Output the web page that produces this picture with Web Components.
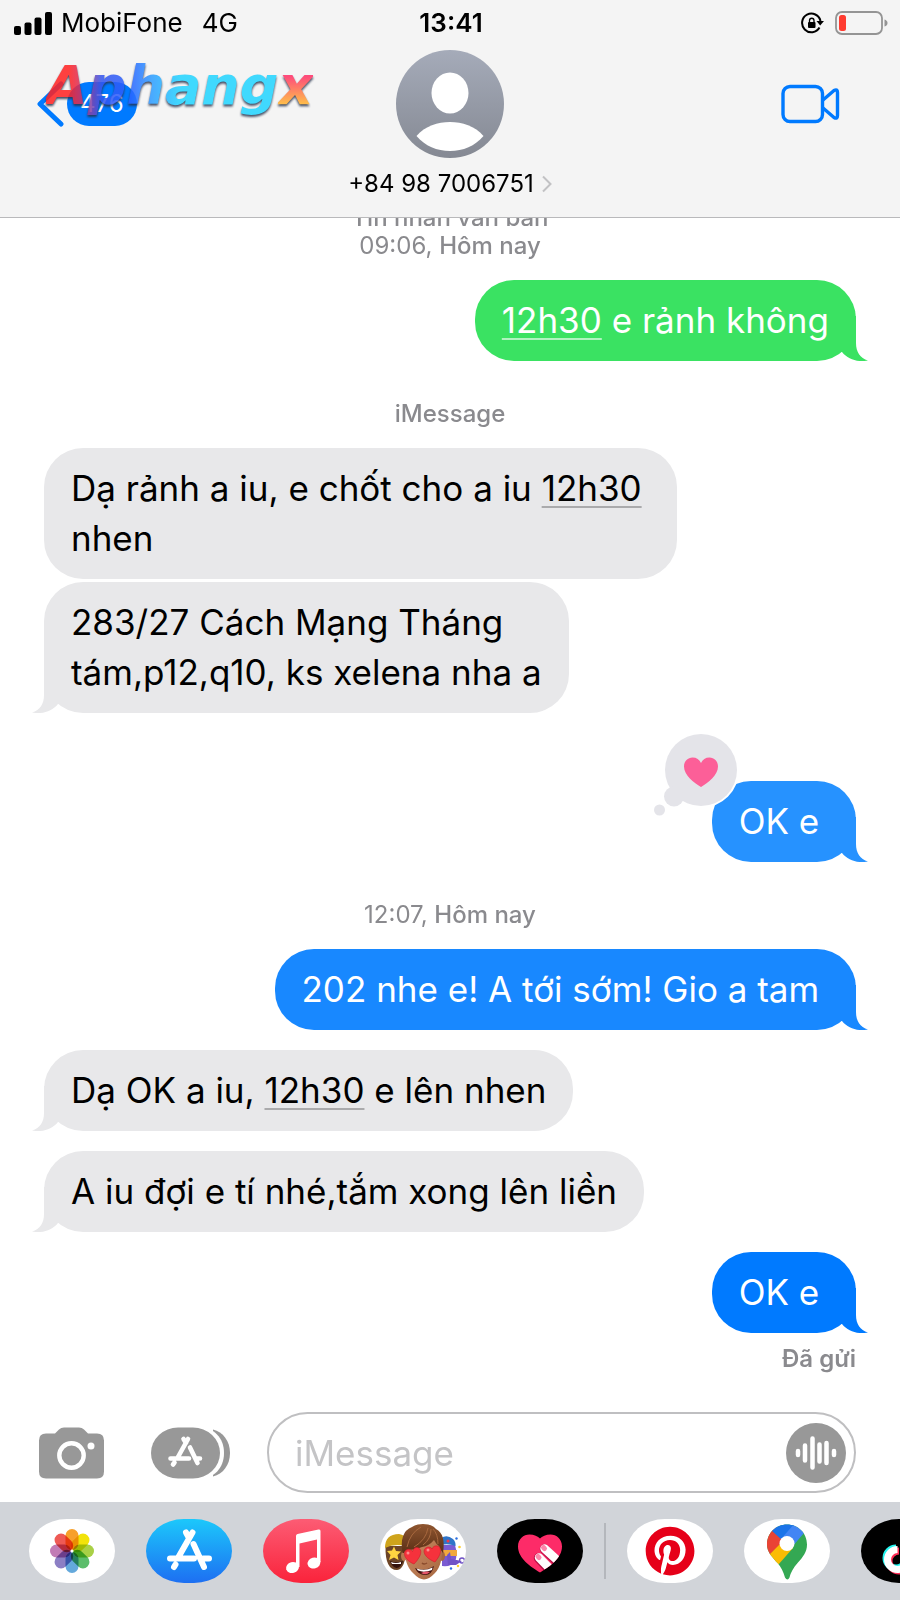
<!DOCTYPE html>
<html lang="vi">
<head>
<meta charset="utf-8">
<meta name="viewport" content="width=device-width, initial-scale=1">
<title>+84 98 7006751</title>
<style>
  html, body {
    height: 100%;
    margin: 0;
  }

  body {
    font-family: Inter, "Liberation Sans", sans-serif;
    background: #ffffff;
    color: #000000;
    overflow: hidden;
  }
</style>
</head>
<body>
<chat-screen>
  <chat-header slot="header" carrier="MobiFone" network="4G" time="13:41" unread="476" contact="+84 98 7006751"></chat-header>

  <chat-stamp><b>Tin nhắn văn bản</b><br>09:06, <b>Hôm nay</b></chat-stamp>
  <chat-bubble side="out" tail style="--bubble: #3ae262"><a href="#">12h30</a> e rảnh không</chat-bubble>

  <chat-stamp spaced><b>iMessage</b></chat-stamp>
  <chat-bubble side="in" wide>Dạ rảnh a iu, e chốt cho a iu <a href="#">12h30</a><br>nhen</chat-bubble>
  <chat-bubble side="in" tail follows>283/27 Cách Mạng Tháng<br>tám,p12,q10, ks xelena nha a</chat-bubble>
  <chat-bubble side="out" tail reaction="heart" style="--bubble: #2692ff">OK e&nbsp;</chat-bubble>

  <chat-stamp spaced>12:07, <b>Hôm nay</b></chat-stamp>
  <chat-bubble side="out" tail style="--bubble: #1888ff">202 nhe e! A tới sớm! Gio a tam&nbsp;</chat-bubble>
  <chat-bubble side="in" tail>Dạ OK a iu, <a href="#">12h30</a> e lên nhen</chat-bubble>
  <chat-bubble side="in" tail>A iu đợi e tí nhé,tắm xong lên liền</chat-bubble>
  <chat-bubble side="out" tail style="--bubble: #007aff">OK e&nbsp;</chat-bubble>
  <chat-stamp receipt><b>Đã gửi</b></chat-stamp>

  <chat-composer slot="footer" placeholder="iMessage"></chat-composer>
  <app-drawer slot="footer">
    <drawer-app name="photos" label="Ảnh"></drawer-app>
    <drawer-app name="store" label="App Store"></drawer-app>
    <drawer-app name="music" label="Nhạc"></drawer-app>
    <drawer-app name="memoji" label="Memoji"></drawer-app>
    <drawer-app name="touch" label="Digital Touch"></drawer-app>
    <drawer-app slot="more" name="pinterest" label="Pinterest"></drawer-app>
    <drawer-app slot="more" name="maps" label="Google Maps"></drawer-app>
    <drawer-app slot="more" name="tiktok" label="TikTok"></drawer-app>
  </app-drawer>
</chat-screen>

<script>
class ChatScreen extends HTMLElement {
  constructor() {
    super();
    this.attachShadow({ mode: "open" }).innerHTML = `
<style>
  :host {
    display: flex;
    flex-direction: column;
    height: 100%;
  }

  /* newest messages stay at the bottom, older ones slide under the header */
  main {
    flex: 1;
    min-height: 0;
    display: flex;
    flex-direction: column;
    justify-content: flex-end;
    overflow: hidden;
    padding: 0 44px 30px;
  }
</style>
<slot name="header"></slot>
<main><slot></slot></main>
<slot name="footer"></slot>
`;
  }
}

class ChatHeader extends HTMLElement {
  constructor() {
    super();
    this.attachShadow({ mode: "open" });
  }

  connectedCallback() {
    const get = (name) => this.getAttribute(name);
    this.shadowRoot.innerHTML = `
<style>
  :host {
    display: block;
    position: relative;
    background: #f4f4f4;
    border-bottom: 1px solid #b9b9bb;
    font-size: 24px;
    line-height: 28px;
  }

  svg {
    display: block;
  }

  .status {
    display: grid;
    grid-template-columns: 1fr auto 1fr;
    align-items: center;
    height: 46px;
    padding: 0 12px 0 14px;
    font-size: 26px;
  }

  .status > div {
    display: flex;
    align-items: center;
  }

  .carrier {
    gap: 9px;
  }

  .network {
    margin-left: 10px;
  }

  .time {
    font-weight: 600;
  }

  .power {
    justify-content: flex-end;
    gap: 11px;
  }

  nav {
    display: grid;
    grid-template-columns: 1fr auto 1fr;
    grid-template-rows: 108px 28px;
    row-gap: 12px;
    align-items: center;
    padding: 4px 36px 19px;
  }

  a {
    color: inherit;
    text-decoration: none;
  }

  button {
    border: 0;
    padding: 0;
    background: none;
    cursor: pointer;
  }

  .back {
    display: flex;
    align-items: center;
    gap: 3px;
  }

  .unread {
    padding: 8px 13px;
    border-radius: 22px;
    background: #007aff;
    color: #ffffff;
  }

  .avatar {
    justify-self: center;
  }

  .video {
    justify-self: end;
    margin-right: 24px;
  }

  .contact {
    grid-column: 1 / -1;
    justify-self: center;
    display: flex;
    align-items: center;
    gap: 8px;
  }

  .wordmark {
    position: absolute;
    left: 46px;
    top: 54px;
    font: italic bold 54px/64px "DejaVu Sans", sans-serif;
    opacity: 0.86;
    filter: drop-shadow(0 2px 1px #26334d);
    pointer-events: none;
  }

  .wordmark span {
    background: linear-gradient(90deg, #ff2222 10%, #e02c50 14%, #3355ee 24%, #2a62ff 36%, #2e9fff 46%, #22d4ff 58%);
    background-clip: text;
    -webkit-background-clip: text;
    color: transparent;
  }

  .wordmark .end {
    background: linear-gradient(180deg, #ff2f68 35%, #ffb030 78%);
    background-clip: text;
    -webkit-background-clip: text;
  }
</style>
<div class="status">
  <div class="carrier">
    <svg width="38" height="23" viewBox="0 0 38 23">
      <rect x="0" y="14" width="7" height="9" rx="2"/>
      <rect x="10.5" y="10.5" width="7" height="12.5" rx="2"/>
      <rect x="20.5" y="5.5" width="7" height="17.5" rx="2"/>
      <rect x="31" y="0" width="7" height="23" rx="2"/>
    </svg>
    <span>${get("carrier")}</span>
    <span class="network">${get("network")}</span>
  </div>
  <div class="time">${get("time")}</div>
  <div class="power">
    <svg width="23" height="22" viewBox="0 0 23 22">
      <path d="M18.500 15.500A9.300 9.300 0 1 1 19.500 9" fill="none" stroke="#000" stroke-width="2"/>
      <path d="M15.500 9h7.500l-3.800 4.500z"/>
      <rect x="7" y="10" width="7.500" height="6" rx="1"/>
      <path d="M8.500 10.500V8.500a2.200 2.200 0 0 1 4.500 0v2" fill="none" stroke="#000" stroke-width="1.300"/>
    </svg>
    <svg width="53" height="24" viewBox="0 0 53 24">
      <rect x="1" y="1" width="46" height="22" rx="6" fill="none" stroke="#949494" stroke-width="1.800"/>
      <rect x="4" y="4" width="7" height="16" rx="2.500" fill="#ff3b30"/>
      <path d="M49.500 8.500q3 1 3 3.500t-3 3.500z" fill="#949494"/>
    </svg>
  </div>
</div>
<nav>
  <a class="back" href="#" aria-label="Quay lại">
    <svg width="28" height="48" viewBox="0 0 28 48">
      <path d="M25 4L4 24L25 44" fill="none" stroke="#007aff" stroke-width="5" stroke-linecap="round" stroke-linejoin="round"/>
    </svg>
    <span class="unread">${get("unread")}</span>
  </a>
  <svg class="avatar" width="108" height="108" viewBox="0 0 108 108">
    <defs>
      <linearGradient id="sky" x1="0" y1="0" x2="0" y2="1">
        <stop offset="0" stop-color="#a5abb9"/>
        <stop offset="1" stop-color="#858993"/>
      </linearGradient>
    </defs>
    <circle cx="54" cy="54" r="54" fill="url(#sky)"/>
    <ellipse cx="54" cy="43" rx="18.500" ry="20.500" fill="#fff"/>
    <path d="M20.500 86C29 76 42 72 54 72s25 4 33.500 14C79 96 67 101 54 101S29 96 20.500 86z" fill="#fff"/>
  </svg>
  <button class="video" type="button" aria-label="FaceTime">
    <svg width="59" height="40" viewBox="0 0 59 40">
      <g fill="none" stroke="#007aff" stroke-width="3.400" stroke-linejoin="round">
        <rect x="2" y="2.500" width="39.500" height="35" rx="7"/>
        <path d="M42 16L53 6.500Q56.500 4.500 56.500 8.500v23q0 4-3.500 2L42 24"/>
      </g>
    </svg>
  </button>
  <a class="contact" href="#">
    <span>${get("contact")}</span>
    <svg width="10" height="18" viewBox="0 0 10 18">
      <path d="M1 1.500L8.500 9L1 16.500" fill="none" stroke="#c2c2c4" stroke-width="2"/>
    </svg>
  </a>
</nav>
<div class="wordmark"><span>Aphang</span><span class="end">x</span></div>
`;
  }
}

class ChatStamp extends HTMLElement {
  constructor() {
    super();
    this.attachShadow({ mode: "open" }).innerHTML = `
<style>
  :host {
    flex: none;
    display: block;
    text-align: center;
    font-size: 24px;
    line-height: 28px;
    color: #8a8a8e;
  }

  :host([spaced]) {
    margin-top: 39px;
  }

  :host([receipt]) {
    margin-top: 12px;
    text-align: right;
  }

  ::slotted(b) {
    font-weight: 500;
  }

  :host([receipt]) ::slotted(b) {
    font-weight: 600;
  }
</style>
<slot></slot>
`;
  }
}

const reactions = {
  heart: `
<svg class="reaction" width="88" height="88" viewBox="0 0 88 88">
  <circle cx="49" cy="38" r="38" fill="#fff"/>
  <g fill="#e4e4e9">
    <circle cx="49" cy="38" r="36"/>
    <circle cx="22" cy="64.500" r="10"/>
    <circle cx="7.500" cy="78" r="5.500"/>
  </g>
  <path d="M49 55C42 50.500 32 43.500 32 34.500C32 29 36 25.500 40.500 25.500C44.500 25.500 47.500 27.500 49 31C50.500 27.500 53.500 25.500 57.500 25.500C62 25.500 66 29 66 34.500C66 43.500 56 50.500 49 55z" fill="#fc5f98"/>
</svg>`,
};

class ChatBubble extends HTMLElement {
  constructor() {
    super();
    this.attachShadow({ mode: "open" });
  }

  connectedCallback() {
    const reaction = reactions[this.getAttribute("reaction")] || "";
    this.shadowRoot.innerHTML = `
<style>
  :host {
    flex: none;
    position: relative;
    box-sizing: border-box;
    max-width: 78%;
    margin-top: 20px;
    padding: 15px 27px 16px;
    border-radius: 39px;
    font-size: 35px;
    line-height: 50px;
  }

  :host([side="in"]) {
    align-self: flex-start;
    background: #e8e8ea;
    --bubble: #e8e8ea;
    --underline: #aaaaac;
  }

  :host([side="out"]) {
    align-self: flex-end;
    background: var(--bubble);
    color: #ffffff;
    --underline: rgba(255, 255, 255, 0.6);
  }

  :host([wide]) {
    width: 78%;
  }

  :host([follows]) {
    margin-top: 3px;
  }

  :host([reaction]) {
    margin-top: 68px;
  }

  ::slotted(a) {
    color: inherit;
    text-decoration: underline 2px var(--underline);
    text-underline-offset: 5px;
    text-decoration-skip-ink: none;
  }

  .tail {
    display: none;
    position: absolute;
    right: -12px;
    bottom: 0;
    fill: var(--bubble);
  }

  :host([tail]) .tail {
    display: block;
  }

  :host([side="in"]) .tail {
    right: auto;
    left: -12px;
    transform: scaleX(-1);
  }

  .reaction {
    position: absolute;
    left: -60px;
    top: -49px;
  }
</style>
<slot></slot>
<svg class="tail" width="27" height="45" viewBox="0 0 27 45">
  <path d="M0 0H15V27C15 36 19 42 27 44.500C17 46.500 7 43.500 1 36L0 36z"/>
</svg>
${reaction}
`;
  }
}

class ChatComposer extends HTMLElement {
  constructor() {
    super();
    this.attachShadow({ mode: "open" });
  }

  connectedCallback() {
    const placeholder = this.getAttribute("placeholder");
    this.shadowRoot.innerHTML = `
<style>
  :host {
    display: flex;
    align-items: center;
    padding: 9px 44px 9px 38px;
  }

  button {
    flex: none;
    border: 0;
    padding: 0;
    background: none;
    cursor: pointer;
  }

  svg {
    display: block;
  }

  .apps {
    margin: 0 36px 0 46px;
  }

  .field {
    flex: 1;
    min-width: 0;
    display: flex;
    align-items: center;
    box-sizing: border-box;
    height: 81px;
    padding: 0 8px 0 26px;
    border: 2px solid #bfbfc1;
    border-radius: 41px;
  }

  input {
    flex: 1;
    min-width: 0;
    border: 0;
    padding: 0;
    outline: none;
    background: none;
    font: inherit;
    font-size: 35px;
    line-height: 50px;
  }

  input::placeholder {
    color: #c4c4c6;
    opacity: 1;
  }
</style>
<button type="button" aria-label="Camera">
  <svg width="67" height="52" viewBox="0 0 67 52">
    <path d="M8 6.500H17L21 2.500Q23 .5 26 .5H41Q44 .5 46 2.500L50 6.500H59Q66 6.500 66 13.500V44.500Q66 51.500 59 51.500H8Q1 51.500 1 44.500V13.500Q1 6.500 8 6.500z" fill="#989898"/>
    <circle cx="33.500" cy="28.500" r="12.200" fill="none" stroke="#fff" stroke-width="4.400"/>
    <circle cx="53" cy="19" r="3.500" fill="#fff"/>
  </svg>
</button>
<button class="apps" type="button" aria-label="Ứng dụng">
  <svg width="80" height="52" viewBox="0 0 80 52">
    <path d="M62 2.500C72 5 79 14 79 26S72 47 62 49.500z" fill="#989898"/>
    <path d="M27 0H47C63 0 73 11 73 26S63 52 47 52z" fill="#fff"/>
    <rect x="0" y=".5" width="69" height="51" rx="27" ry="25.500" fill="#989898"/>
    <g stroke="#fff" stroke-width="4.600" stroke-linecap="round" fill="none">
      <path d="M37 12L27 30M32.500 12L35 16M39 20.500L46.500 36M19.500 31.500H38M45 31.500H49M23.500 35.500L22 37.500"/>
    </g>
  </svg>
</button>
<div class="field">
  <input type="text" placeholder="${placeholder}" aria-label="${placeholder}">
  <button type="button" aria-label="Ghi âm">
    <svg width="60" height="60" viewBox="0 0 60 60">
      <circle cx="30" cy="30" r="30" fill="#989898"/>
      <path d="M12 28v4M19 22.500v15M26.500 15.500v29M33.500 21.500v17M40.500 20v20M48 28v4" stroke="#fff" stroke-width="4.500" stroke-linecap="round"/>
    </svg>
  </button>
</div>
`;
  }
}

class AppDrawer extends HTMLElement {
  constructor() {
    super();
    this.attachShadow({ mode: "open" }).innerHTML = `
<style>
  :host {
    display: flex;
    align-items: center;
    padding: 17px 0 17px 29px;
    background: #d1d4d9;
    overflow: hidden;
  }

  div {
    flex: none;
    display: flex;
    gap: 31px;
  }

  hr {
    flex: none;
    width: 2px;
    height: 56px;
    margin: 0 21px;
    border: 0;
    background: #b4b7bc;
  }
</style>
<div><slot></slot></div>
<hr>
<div><slot name="more"></slot></div>
`;
  }
}

const petals = ["#f7a02b", "#f2e30a", "#a9d046", "#5cbd6b", "#64a9dc", "#8c7fc4", "#c27cb5", "#ee5a55"]
  .map((color, i) => `<rect x="36.500" y="10" width="13" height="21" rx="6.500" fill="${color}" transform="rotate(${i * 45} 43 32)"/>`)
  .join("");

// every icon is drawn on the 86x64 pill
const apps = {
  photos: {
    back: "#ffffff",
    art: `<g style="isolation: isolate" class="petals">${petals}</g><circle cx="43" cy="32" r="1.500" fill="#fff"/>`,
  },
  store: {
    back: "linear-gradient(#1cc8fb, #1d6ff2)",
    art: `
      <g stroke="#fff" stroke-width="6" stroke-linecap="round" fill="none">
        <path d="M46.500 13.500L32.500 38M40 13.500L43 19M47.500 25L58 48M24 39.500H48M57 39.500H63M29.500 45.500L28 48"/>
      </g>`,
  },
  music: {
    back: "linear-gradient(#fc5c74, #fa233b)",
    art: `
      <g fill="#fff">
        <path d="M33 17Q33 15.500 34.500 15L55.500 10.500Q57.500 10 57.500 12V43H54V20.500L36.500 24.500V48H33z"/>
        <ellipse cx="29.500" cy="48.500" rx="6.500" ry="5.500" transform="rotate(-15 29.500 48.500)"/>
        <ellipse cx="51" cy="44" rx="6.500" ry="5.500" transform="rotate(-15 51 44)"/>
      </g>`,
  },
  memoji: {
    back: "#ffffff",
    art: `
      <defs>
        <linearGradient id="skin" x1="0" y1="0" x2="1" y2="1">
          <stop offset="0" stop-color="#cf9068"/>
          <stop offset="1" stop-color="#a5663f"/>
        </linearGradient>
        <linearGradient id="hair" x1="0" y1="0" x2="0" y2="1">
          <stop offset="0" stop-color="#8f5630"/>
          <stop offset="1" stop-color="#5a2f16"/>
        </linearGradient>
      </defs>
      <path d="M5.500 27Q5 51 17 51Q26 50 26 27z" fill="#6d4527"/>
      <path d="M5 29Q5 15 19 15Q25 16 26 20V27Q14 24 5 29z" fill="#cfa41c"/>
      <path d="M10 42Q16 44.500 23 42Q21 49 16.500 49Q12 48 10 42z" fill="#34130d"/>
      <path d="M11 43Q16 45 21 43V45H12z" fill="#fff"/>
      <path d="M14 27.500L16 32L21 32.500L17.500 36L18.500 41L14 38.500L9 41L10.500 36L7 32L12 31.500z" fill="#ffd541"/>
      <path d="M62 26H75Q78 36 75 43Q71 48 62 47z" fill="#7a5bd2"/>
      <path d="M61 19Q67 15 73 20Q76 23 75.500 27Q68 24 61 26z" fill="#2f75c9"/>
      <circle cx="68" cy="22" r="1.500" fill="#f0384d"/>
      <path d="M60 31H77V37H60z" fill="#f2a93c"/>
      <path d="M67 36L70 33L71 40L82 42L76 46L68 46z" fill="#7052c6"/>
      <circle cx="82" cy="41.500" r="2.500" fill="none" stroke="#7052c6" stroke-width="1.300"/>
      <g fill="#2d6fe0"><circle cx="76.500" cy="19.500" r="1.200"/><circle cx="71" cy="49.500" r="1.200"/></g>
      <g fill="#ffcf2b"><circle cx="79.500" cy="28" r="1.300"/><circle cx="78" cy="47" r="1.200"/></g>
      <ellipse cx="24" cy="37" rx="3" ry="5" fill="#b87950"/>
      <ellipse cx="62" cy="37" rx="3" ry="5" fill="#a5663f"/>
      <path d="M24 24Q24 14 43 14T62 26Q63 46 55 54Q49 60.500 44 60.500T33 54Q24 46 24 24z" fill="url(#skin)"/>
      <path d="M22.500 34Q19 13 32 8Q36 5 43 5Q52 5 56 10Q66 15 63 34Q61 32 59 27Q56 25 54 21Q49 27 42 28Q36 31 29 31Q25 31 24 34z" fill="url(#hair)"/>
      <path d="M27 28Q30 14 41 8M34 28Q46 21 48 9M43 26Q51 20 51 10M58 25Q58 15 53 10" fill="none" stroke="#a8693f" stroke-width="1"/>
      <path d="M35 49Q45 53 54 47Q52 56 45 56Q38 56 35 49z" fill="#431410"/>
      <path d="M36.500 49.500Q45 52.500 52.500 48.500L52 51Q44 54 38 51.500z" fill="#fff"/>
      <path d="M41 54Q45 51.500 50 53Q46 57 41 54z" fill="#e5566a"/>
      <path d="M42 44Q44 46 47 44" fill="none" stroke="#8a4b2c" stroke-width="1.500"/>
      <g fill="#f5323c" stroke="#d11d2b" stroke-width=".6">
        <path d="M34 45C29 43 24 39 24.500 34C25 30 30 29 32.500 32.500C33.500 28 38.500 27 40.500 31C42 35 38 41 34 45z"/>
        <path d="M55 43C50 41 44 37 44 32C44.500 28 50 26.500 52 30C53.500 26 58.500 26 60 29C62 34 58 39 55 43z"/>
      </g>
      <g fill="#ff8c8c"><circle cx="28" cy="34" r="1.500"/><circle cx="48" cy="31" r="1.500"/></g>`,
  },
  touch: {
    back: "#000000",
    art: `
      <defs>
        <clipPath id="love">
          <path d="M43 53.500C34 48 21 39.500 21 27.500C21 20 26.500 15.500 32.500 15.500C37 15.500 41 17.500 43 19.500C45 17.500 49 15.500 53.500 15.500C59.500 15.500 65 20 65 27.500C65 39.500 52 48 43 53.500z"/>
        </clipPath>
      </defs>
      <g clip-path="url(#love)">
        <rect width="86" height="64" fill="#fd2b68"/>
        <g stroke-linecap="round">
          <path d="M41.500 39L60 59M47.500 30L72 54" stroke="#b80f45" stroke-width="9.500"/>
          <path d="M42 38.500L60 57M47.500 29.500L72 52" stroke="#fff" stroke-width="8.500"/>
          <path d="M41 37.500L42 38.500M46.500 28.500L47.500 29.500" stroke="#fd86ab" stroke-width="5"/>
        </g>
      </g>`,
  },
  pinterest: {
    back: "#ffffff",
    art: `
      <path fill="#e60019" transform="translate(18.700 7.700) scale(2.030)" d="M12 0C5.373 0 0 5.372 0 12c0 5.084 3.163 9.426 7.627 11.174-.105-.949-.2-2.405.042-3.441.218-.937 1.407-5.965 1.407-5.965s-.359-.719-.359-1.782c0-1.668.967-2.914 2.171-2.914 1.023 0 1.518.769 1.518 1.690 0 1.029-.655 2.568-.994 3.995-.283 1.194.599 2.169 1.777 2.169 2.133 0 3.772-2.249 3.772-5.495 0-2.873-2.064-4.882-5.012-4.882-3.414 0-5.418 2.561-5.418 5.207 0 1.031.397 2.138.893 2.738.098.119.112.224.083.345l-.333 1.360c-.053.220-.174.267-.402.161-1.499-.698-2.436-2.889-2.436-4.649 0-3.785 2.750-7.262 7.929-7.262 4.163 0 7.398 2.967 7.398 6.931 0 4.136-2.607 7.464-6.227 7.464-1.216 0-2.359-.631-2.750-1.378l-.748 2.853c-.271 1.043-1.002 2.350-1.492 3.146 1.124.347 2.317.535 3.554.535 6.627 0 12-5.373 12-12S18.627 0 12 0z"/>`,
  },
  maps: {
    back: "#ffffff",
    art: `
      <defs>
        <clipPath id="pin">
          <path d="M43 5.500C54 5.500 63 14 63 25.500C63 33 59 38 54 43.500C49 49 46.500 54 45.500 58.500Q43.500 62.500 41 58.500C39.500 53 37 48 34 44.500C28 38 23 33 23 25.500C23 14 32 5.500 43 5.500z"/>
        </clipPath>
      </defs>
      <g clip-path="url(#pin)">
        <rect x="20" y="0" width="50" height="64" fill="#34a853"/>
        <path d="M20 41L43 17L49 29L34 46L20 60z" fill="#fbbc04"/>
        <path d="M20 41L43 18L28 5H20z" fill="#ea4335"/>
        <path d="M28 12L38 21L52 5L40 0H28z" fill="#1a73e8"/>
        <path d="M51 4L37 20L48 28L60 14L66 4z" fill="#4285f4"/>
      </g>
      <circle cx="43" cy="24.500" r="7.500" fill="#fff"/>`,
  },
  tiktok: {
    back: "#000000",
    art: `
      <g fill="none" stroke-width="7">
        <path d="M46 10V40A10 10 0 1 1 36 30M46 10Q47 20 58 21" stroke="#25f4ee" transform="translate(-1 -1)"/>
        <path d="M46 10V40A10 10 0 1 1 36 30M46 10Q47 20 58 21" stroke="#fe2c55" transform="translate(2 2)"/>
        <path d="M46 10V40A10 10 0 1 1 36 30M46 10Q47 20 58 21" stroke="#fff" transform="translate(.5 .5)"/>
      </g>`,
  },
};

class DrawerApp extends HTMLElement {
  constructor() {
    super();
    this.attachShadow({ mode: "open" });
  }

  connectedCallback() {
    const app = apps[this.getAttribute("name")];
    this.shadowRoot.innerHTML = `
<style>
  :host {
    display: block;
    flex: none;
  }

  button {
    display: block;
    width: 86px;
    height: 64px;
    border: 0;
    padding: 0;
    border-radius: 38px / 32px;
    background: ${app.back};
    overflow: hidden;
    cursor: pointer;
  }

  svg {
    display: block;
  }

  .petals rect {
    mix-blend-mode: multiply;
  }
</style>
<button type="button" aria-label="${this.getAttribute("label")}">
  <svg width="86" height="64" viewBox="0 0 86 64">${app.art}</svg>
</button>
`;
  }
}

customElements.define("chat-screen", ChatScreen);
customElements.define("chat-header", ChatHeader);
customElements.define("chat-stamp", ChatStamp);
customElements.define("chat-bubble", ChatBubble);
customElements.define("chat-composer", ChatComposer);
customElements.define("app-drawer", AppDrawer);
customElements.define("drawer-app", DrawerApp);
</script>
</body>
</html>
